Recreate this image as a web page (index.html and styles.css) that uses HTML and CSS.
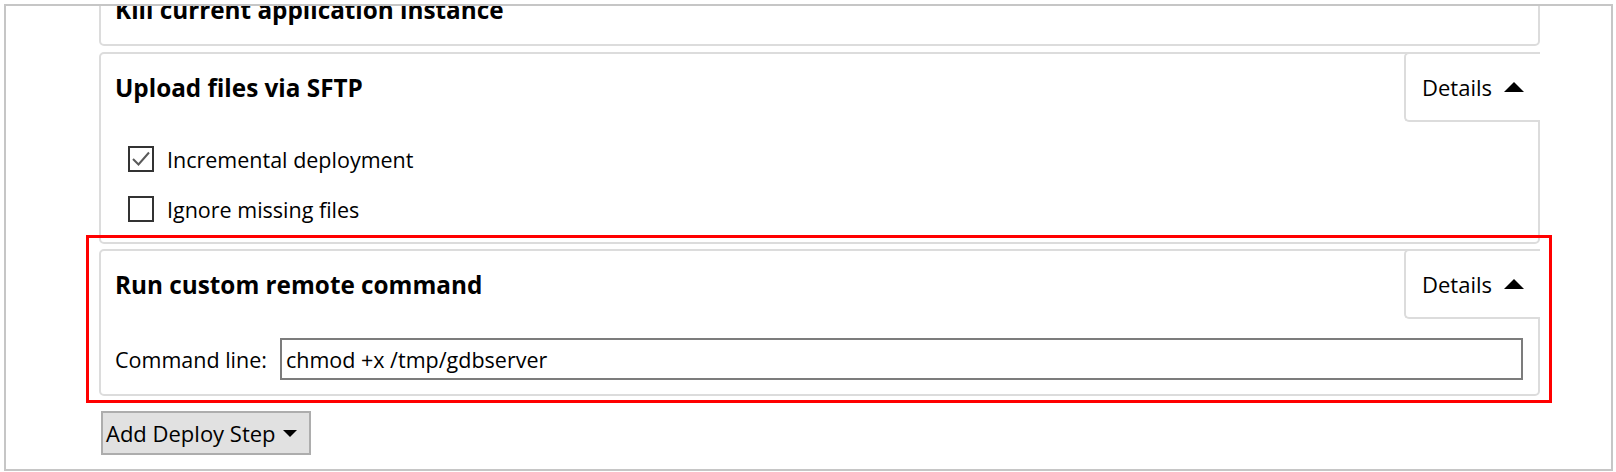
FILE: index.html
```html
<!DOCTYPE html>
<html lang="en">
<head>
<meta charset="utf-8">
<title>Deploy steps</title>
<link rel="stylesheet" href="styles.css">
</head>
<body>
<div class="frame">
  <div class="steps">
    <section class="step step-cut">
      <div class="step-head">
        <h3 class="step-title">Kill current application instance</h3>
      </div>
    </section>

    <section class="step">
      <div class="step-head">
        <h3 class="step-title">Upload files via SFTP</h3>
        <button class="details" type="button">Details<span class="tri-up"></span></button>
      </div>
      <div class="step-body checks">
        <label class="check">
          <span class="box"><svg viewBox="0 0 22 22" width="22" height="22"><path d="M3 11 L8.5 16.5 L19 4.5" fill="none" stroke="#5a5a5a" stroke-width="2"/></svg></span>
          <span class="check-text">Incremental deployment</span>
        </label>
        <label class="check">
          <span class="box"></span>
          <span class="check-text">Ignore missing files</span>
        </label>
      </div>
    </section>

    <section class="step step-marked">
      <div class="step-head">
        <h3 class="step-title">Run custom remote command</h3>
        <button class="details" type="button">Details<span class="tri-up"></span></button>
      </div>
      <div class="step-body command">
        <span class="cmd-label">Command line:</span>
        <div class="cmd-input">chmod +x /tmp/gdbserver</div>
      </div>
    </section>

    <button class="add-step" type="button">Add Deploy Step<span class="tri-down"></span></button>
  </div>
</div>
</body>
</html>
```

FILE: styles.css
```css
* { box-sizing: border-box; }

html, body {
  margin: 0;
  padding: 0;
  background: #ffffff;
}

body {
  font-family: "Open Sans", "Noto Sans", "Liberation Sans", sans-serif;
  font-size: 21.5px;
  color: #000;
  width: 1616px;
  height: 472px;
  overflow: hidden;
}

.frame {
  margin: 4px 0 0 4px;
  width: 1609px;
  height: 467px;
  border: 2px solid #c6c6c6;
  overflow: hidden;
  padding: 0 71px 0 93px;
}

.steps {
  display: flex;
  flex-direction: column;
  align-items: stretch;
}

.step {
  border: 2px solid #dcdcdc;
  border-radius: 5px;
  background: #fff;
  position: relative;
  margin-bottom: 5px;
}

.step-cut {
  margin-top: -32px;
  margin-bottom: 6px;
}

.step-head {
  display: flex;
  align-items: center;
  height: 68px;
}

.step-title {
  margin: 0;
  padding-left: 14px;
  flex: 1;
  font-size: 24.3px;
  font-weight: 700;
  line-height: 32px;
}

.details {
  align-self: flex-start;
  margin: -2px -2px 0 0;
  height: 70px;
  width: 136px;
  padding: 0 0 0 16px;
  border: 2px solid #dcdcdc;
  border-right: none;
  border-radius: 5px 0 0 5px;
  background: #fff;
  font: inherit;
  font-size: 22px;
  color: #000;
  display: flex;
  align-items: center;
}

.tri-up {
  width: 0;
  height: 0;
  margin-left: 12px;
  border-left: 10px solid transparent;
  border-right: 10px solid transparent;
  border-bottom: 10px solid #000;
}

.checks {
  padding: 12px 0 8px 27px;
}

.check {
  display: flex;
  align-items: center;
  height: 50px;
}

.box {
  width: 26px;
  height: 26px;
  border: 2px solid #333;
  display: flex;
  align-items: center;
  justify-content: center;
  margin-right: 13px;
  background: #fff;
}

.box svg { display: block; }

.command {
  display: flex;
  align-items: center;
  padding: 19px 15px 14px 14px;
}

.cmd-label {
  margin-right: 13px;
  white-space: nowrap;
}

.cmd-input {
  flex: 1;
  height: 42px;
  border: 2px solid #7c7c7c;
  padding: 0 4px;
  display: flex;
  align-items: center;
  background: #fff;
}

.step-marked::after {
  content: "";
  position: absolute;
  left: -15px;
  top: -16px;
  right: -14px;
  bottom: -9px;
  border: 3px solid #ff0000;
  pointer-events: none;
}

.add-step {
  align-self: flex-start;
  margin: 10px 0 0 2px;
  width: 210px;
  height: 44px;
  padding: 0 0 0 3px;
  border: 2px solid #adadad;
  background: #e1e1e1;
  font: inherit;
  font-size: 22px;
  color: #000;
  display: flex;
  align-items: center;
}

.tri-down {
  width: 0;
  height: 0;
  margin-left: 7px;
  border-left: 7px solid transparent;
  border-right: 7px solid transparent;
  border-top: 7px solid #000;
}
```
